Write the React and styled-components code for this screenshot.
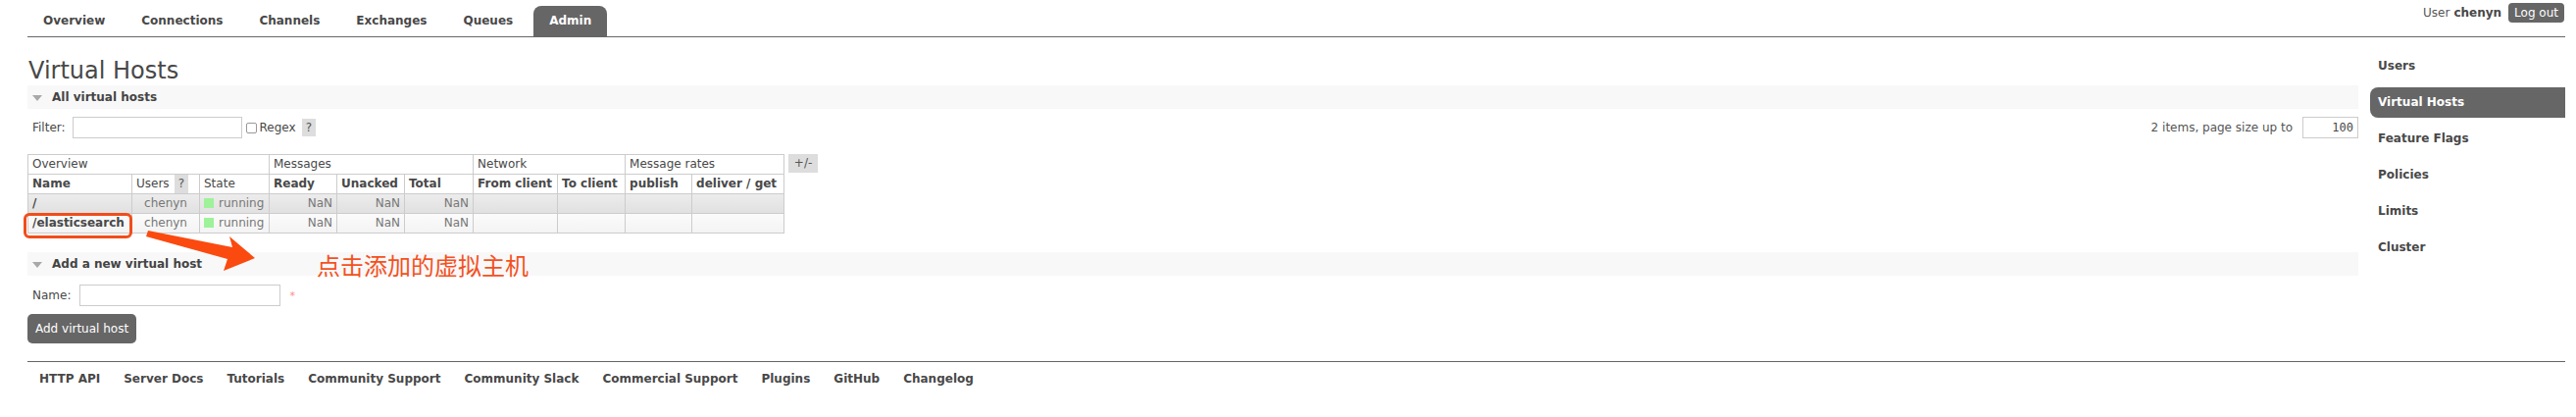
import React from 'react';
import styled, { createGlobalStyle } from 'styled-components';

const GlobalStyle = createGlobalStyle`
  html, body {
    margin: 0;
    padding: 0;
    background: #fff;
  }
  body {
    font-family: "DejaVu Sans", Verdana, sans-serif;
    font-size: 12px;
    color: #484848;
  }
`

const Page = styled.div`
  position: relative;
  width: 2627px;
  box-sizing: border-box;
  padding: 0 11px 0 28px;
`

const Header = styled.div`
  display: flex;
  justify-content: space-between;
  align-items: flex-start;
  height: 37px;
  border-bottom: 1px solid #666;
`

const Tabs = styled.ul`
  display: flex;
  margin: 0;
  padding: 6px 0 0 0;
  list-style: none;
`

const Tab = styled.li`
  padding: 8px 16px;
  margin-right: 5px;
  line-height: 15px;
  font-weight: bold;
  border-radius: 8px 8px 0 0;
  background: ${p => (p.$active ? '#666' : 'transparent')};
  color: ${p => (p.$active ? '#fff' : '#484848')};
`

const UserBox = styled.div`
  display: flex;
  align-items: center;
  padding-top: 3px;
  margin-right: 1px;
  color: #555;
  line-height: 20px;
`

const UserName = styled.b`
  margin-left: 4px;
  color: #484848;
`

const LogOut = styled.span`
  margin-left: 7px;
  padding: 0 6px;
  background: #666;
  color: #fff;
  border-radius: 4px;
  line-height: 20px;
`

const Content = styled.div`
  display: flex;
  gap: 12px;
`

const Main = styled.div`
  flex: 1;
  padding-top: 20px;
`

const Title = styled.h1`
  margin: 0 0 1px 1px;
  font-size: 24px;
  line-height: 28px;
  font-weight: normal;
  color: #484848;
`

const SectionHead = styled.h2`
  position: relative;
  margin: 0;
  padding: 5px 5px 5px 25px;
  font-size: 12px;
  line-height: 14px;
  font-weight: bold;
  background: #f8f8f8;
  color: #444;

  &::before {
    content: '';
    position: absolute;
    left: 5px;
    top: 10px;
    border-left: 5px solid transparent;
    border-right: 5px solid transparent;
    border-top: 6px solid #a8a8a8;
  }
`

const Note = styled.span`
  position: absolute;
  left: 295px;
  top: 0;
  font-family: "Noto Sans CJK SC", sans-serif;
  font-size: 24px;
  line-height: 26px;
  font-weight: normal;
  color: #f4511e;
  white-space: nowrap;
`

const FilterRow = styled.div`
  display: flex;
  justify-content: space-between;
  align-items: center;
  margin-top: 8px;
  height: 22px;
`

const Group = styled.div`
  display: flex;
  align-items: center;
`

const Label = styled.span`
  padding-left: 5px;
`

const TextInput = styled.input`
  box-sizing: border-box;
  width: ${p => p.$width}px;
  height: 22px;
  margin: 0 0 0 ${p => p.$gap}px;
  padding: 2px 4px;
  border: 1px solid #ccc;
  font-family: inherit;
  font-size: 12px;
  color: #484848;
  background: #fff;
`

const SizeInput = styled(TextInput)`
  font-family: "DejaVu Sans Mono", monospace;
  text-align: right;
`

const Check = styled.span`
  display: inline-block;
  box-sizing: border-box;
  width: 11px;
  height: 11px;
  margin-left: 4px;
  border: 1px solid #999;
  border-radius: 2px;
  background: #fff;
`

const CheckLabel = styled.span`
  margin-left: 3px;
`

const Help = styled.span`
  display: inline-block;
  margin-left: 6px;
  padding: 0 4px;
  background: #ddd;
  color: #555;
  line-height: 18px;
`

const PageSize = styled.span`
  color: #555;
`

const TableRow = styled.div`
  display: flex;
  align-items: flex-start;
  gap: 4px;
  margin-top: 16px;
`

const Table = styled.table`
  border-collapse: collapse;
  table-layout: fixed;
  width: 771px;
`

const Cell = styled.td`
  position: relative;
  border: 1px solid #ccc;
  padding: 2px 4px;
  line-height: 15px;
  white-space: nowrap;
  font-weight: ${p => (p.$bold ? 'bold' : 'normal')};
  text-align: ${p => p.$align || 'left'};
  color: ${p => p.$muted ? '#777' : '#484848'};
`

const HeadHelp = styled.span`
  position: absolute;
  top: 0;
  bottom: 0;
  right: 11px;
  width: 14px;
  background: #ddd;
  text-align: center;
  line-height: 19px;
  color: #555;
`

const DataRow = styled.tr`
  background: ${p =>
    p.$alt
      ? 'linear-gradient(#fbfbfb, #f3f3f3)'
      : 'linear-gradient(#ececec, #e0e0e0)'};
`

const StateDot = styled.span`
  display: inline-block;
  width: 10px;
  height: 10px;
  margin-right: 5px;
  vertical-align: -1px;
  background: #9ef29a;
`

const Highlight = styled.span`
  position: absolute;
  left: -5px;
  top: -1px;
  right: -1px;
  bottom: -6px;
  border: 3px solid #f04e1c;
  border-radius: 6px;
`

const Toggle = styled.span`
  display: inline-block;
  width: 30px;
  line-height: 19px;
  text-align: center;
  background: #ddd;
  color: #555;
`

const AddSection = styled.div`
  margin-top: 19px;
`

const FormRow = styled.div`
  display: flex;
  align-items: center;
  margin-top: 9px;
  height: 22px;
`

const Required = styled.span`
  margin-left: 9px;
  color: #f88;
  font-size: 11px;
`

const Button = styled.button`
  display: block;
  margin-top: 8px;
  height: 30px;
  padding: 0 8px;
  border: none;
  border-radius: 5px;
  background: #666;
  color: #fff;
  font-family: inherit;
  font-size: 12px;
`

const Sidebar = styled.ul`
  width: 199px;
  margin: 14px 0 0 0;
  padding: 0;
  list-style: none;
`

const SideItem = styled.li`
  padding: 8px;
  margin-bottom: 6px;
  line-height: 15px;
  font-weight: bold;
  border-radius: 8px 0 0 8px;
  background: ${p => (p.$active ? '#666' : 'transparent')};
  color: ${p => (p.$active ? '#fff' : '#484848')};
`

const Footer = styled.ul`
  display: flex;
  margin: 18px 0 0 0;
  padding: 10px 0 0 0;
  list-style: none;
  border-top: 1px solid #666;
`

const FooterLink = styled.li`
  padding: 0 12px;
  line-height: 15px;
  font-weight: bold;
  color: #484848;
`

const Arrow = styled.svg`
  position: absolute;
  left: 0;
  top: 0;
  pointer-events: none;
`

const tabs = ['Overview', 'Connections', 'Channels', 'Exchanges', 'Queues', 'Admin'];
const side = ['Users', 'Virtual Hosts', 'Feature Flags', 'Policies', 'Limits', 'Cluster'];
const footer = ['HTTP API', 'Server Docs', 'Tutorials', 'Community Support', 'Community Slack', 'Commercial Support', 'Plugins', 'GitHub', 'Changelog'];
const colWidths = [106, 69, 71, 69, 69, 70, 86, 69, 68, 94];
const vhosts = [
  { name: '/', user: 'chenyn' },
  { name: '/elasticsearch', user: 'chenyn', marked: true },
];

const VhostTable = () => (
  <Table>
    <colgroup>
      {colWidths.map((w, i) => <col key={i} style={{ width: w }} />)}
    </colgroup>
    <thead>
      <tr>
        <Cell as="th" colSpan={3}>Overview</Cell>
        <Cell as="th" colSpan={3}>Messages</Cell>
        <Cell as="th" colSpan={2}>Network</Cell>
        <Cell as="th" colSpan={2}>Message rates</Cell>
      </tr>
      <tr>
        <Cell as="th" $bold>Name</Cell>
        <Cell as="th">Users <HeadHelp>?</HeadHelp></Cell>
        <Cell as="th">State</Cell>
        <Cell as="th" $bold>Ready</Cell>
        <Cell as="th" $bold>Unacked</Cell>
        <Cell as="th" $bold>Total</Cell>
        <Cell as="th" $bold>From client</Cell>
        <Cell as="th" $bold>To client</Cell>
        <Cell as="th" $bold>publish</Cell>
        <Cell as="th" $bold>deliver / get</Cell>
      </tr>
    </thead>
    <tbody>
      {vhosts.map((v, i) => (
        <DataRow key={v.name} $alt={i % 2 === 1}>
          <Cell $bold>
            {v.name}
            {v.marked && <Highlight />}
          </Cell>
          <Cell $align="center" $muted>{v.user}</Cell>
          <Cell $muted><StateDot />running</Cell>
          <Cell $align="right" $muted>NaN</Cell>
          <Cell $align="right" $muted>NaN</Cell>
          <Cell $align="right" $muted>NaN</Cell>
          <Cell />
          <Cell />
          <Cell />
          <Cell />
        </DataRow>
      ))}
    </tbody>
  </Table>
);

export default function App() {
  return (
    <Page>
      <GlobalStyle />
      <Header>
        <Tabs>
          {tabs.map(t => <Tab key={t} $active={t === 'Admin'}>{t}</Tab>)}
        </Tabs>
        <UserBox>
          User <UserName>chenyn</UserName>
          <LogOut>Log out</LogOut>
        </UserBox>
      </Header>

      <Content>
        <Main>
          <Title>Virtual Hosts</Title>
          <SectionHead>All virtual hosts</SectionHead>
          <FilterRow>
            <Group>
              <Label>Filter:</Label>
              <TextInput $width={173} $gap={7} />
              <Check />
              <CheckLabel>Regex</CheckLabel>
              <Help>?</Help>
            </Group>
            <Group>
              <PageSize>2 items, page size up to</PageSize>
              <SizeInput $width={57} $gap={10} defaultValue="100" />
            </Group>
          </FilterRow>
          <TableRow>
            <VhostTable />
            <Toggle>+/-</Toggle>
          </TableRow>

          <AddSection>
            <SectionHead>
              Add a new virtual host
              <Note>点击添加的虚拟主机</Note>
            </SectionHead>
            <FormRow>
              <Label>Name:</Label>
              <TextInput $width={205} $gap={9} />
              <Required>*</Required>
            </FormRow>
            <Button>Add virtual host</Button>
          </AddSection>
        </Main>

        <Sidebar>
          {side.map(s => <SideItem key={s} $active={s === 'Virtual Hosts'}>{s}</SideItem>)}
        </Sidebar>
      </Content>

      <Footer>
        {footer.map(f => <FooterLink key={f}>{f}</FooterLink>)}
      </Footer>

      <Arrow width="300" height="300" viewBox="0 0 300 300">
        <polygon
          points="151,235 237,252 234,241 260,263 228,276 232,264 149,241"
          fill="#fb4a10"
        />
      </Arrow>
    </Page>
  );
}
